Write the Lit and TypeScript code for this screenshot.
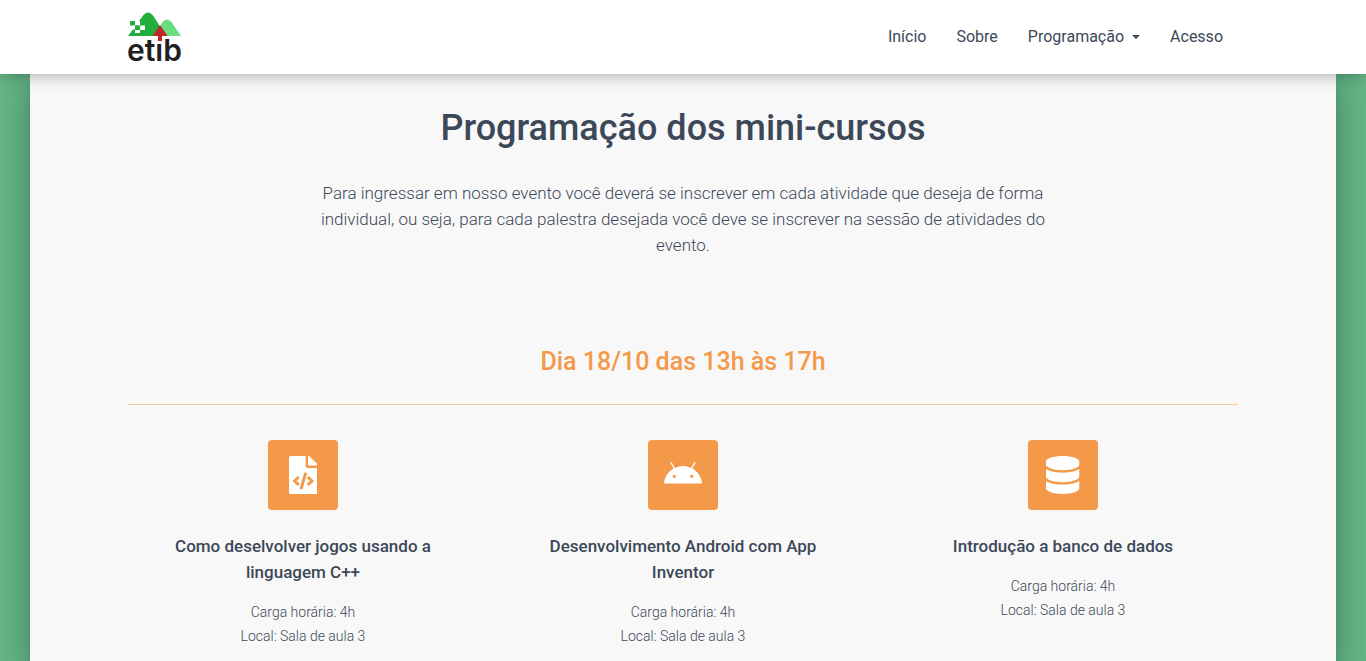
import { LitElement, html, css, svg } from "lit";
import { customElement, property } from "lit/decorators.js";

type IconName = "code" | "android" | "database";

interface Course {
  icon: IconName;
  title: string;
  hours: string;
  place: string;
}

const ICONS: Record<IconName, { width: number; path: string }> = {
  code: {
    width: 384,
    path: "M384 121.941V128H256V0h6.059c6.365 0 12.47 2.529 16.971 7.029l97.941 97.941A24.005 24.005 0 0 1 384 121.941zM248 160c-13.2 0-24-10.8-24-24V0H24C10.745 0 0 10.745 0 24v464c0 13.255 10.745 24 24 24h336c13.255 0 24-10.745 24-24V160H248zM123.206 400.505a5.4 5.4 0 0 1-7.633.246l-64.866-60.812a5.4 5.4 0 0 1 0-7.879l64.866-60.812a5.4 5.4 0 0 1 7.633.246l19.579 20.885a5.4 5.4 0 0 1-.372 7.747L101.65 336l40.763 35.874a5.4 5.4 0 0 1 .372 7.747l-19.579 20.884zm51.295 50.479l-27.97-8.147a5.402 5.402 0 0 1-3.674-6.692l61.44-210.94a5.4 5.4 0 0 1 6.692-3.674l27.97 8.147a5.4 5.4 0 0 1 3.674 6.692l-61.44 210.94a5.4 5.4 0 0 1-6.692 3.674zm160.792-111.045l-64.866 60.812a5.4 5.4 0 0 1-7.633-.246l-19.58-20.885a5.4 5.4 0 0 1 .372-7.747L284.35 336l-40.763-35.874a5.4 5.4 0 0 1-.372-7.747l19.58-20.885a5.4 5.4 0 0 1 7.633-.246l64.866 60.812a5.4 5.4 0 0 1-.001 7.879z",
  },
  android: {
    width: 576,
    path: "M420.55 301.93a24 24 0 1 1 24-24 24 24 0 0 1-24 24m-265.1 0a24 24 0 1 1 24-24 24 24 0 0 1-24 24m273.7-144.48 47.94-83a10 10 0 1 0-17.27-10l-48.54 84.07a301.25 301.25 0 0 0-246.56 0L116.18 64.45a10 10 0 1 0-17.27 10l47.94 83C64.53 202.22 8.24 285.55 0 384H576c-8.24-98.45-64.54-181.78-146.85-226.55",
  },
  database: {
    width: 448,
    path: "M448 73.143v45.714C448 159.143 347.667 192 224 192S0 159.143 0 118.857V73.143C0 32.857 100.333 0 224 0s224 32.857 224 73.143zM448 176v102.857C448 319.143 347.667 352 224 352S0 319.143 0 278.857V176c48.125 33.143 136.208 48.572 224 48.572S399.874 209.143 448 176zm0 160v102.857C448 479.143 347.667 512 224 512S0 479.143 0 438.857V336c48.125 33.143 136.208 48.572 224 48.572S399.874 369.143 448 336z",
  },
};

const COURSES: Course[] = [
  { icon: "code", title: "Como deselvolver jogos usando a linguagem C++", hours: "4h", place: "Sala de aula 3" },
  { icon: "android", title: "Desenvolvimento Android com App Inventor", hours: "4h", place: "Sala de aula 3" },
  { icon: "database", title: "Introdução a banco de dados", hours: "4h", place: "Sala de aula 3" },
];

@customElement("etib-logo")
export class EtibLogo extends LitElement {
  static styles = css`
    :host {
      display: block;
    }
    .logo {
      display: block;
      width: 54px;
      height: 50px;
      overflow: visible;
    }
    .word {
      font: 600 30px Inter, "Liberation Sans", sans-serif;
      fill: #231f20;
    }
  `;

  render() {
    return html`<svg class="logo" viewBox="0 0 54 50" role="img" aria-label="etib">
      ${svg`
        <path fill="#6bdc80" d="M26 24 L34.500 10 Q39 5 43.500 10 L53 24 Z" />
        <path fill="#22ad3c" d="M0 24 L14 5 Q20 -4 26 5 L38 24 Z" />
        <path fill="#fff" d="M7 9h5v4.500h-5z M12 13.500h5v4.500h-5z M2 13.500h5v4h-5z M7 18h5v3h-5z" />
        <path fill="#22ad3c" d="M2 9h5v4.500h-5z M7 13.500h5v4.500h-5z" />
        <text class="word" x="-1" y="49">etib</text>
        <path fill="#fff" d="M29 24h6v7h-6z" />
        <path fill="#c1272d" d="M32 13 L39.500 24 H34 V29 H30 V24 H24.500 Z" />
      `}
    </svg>`;
  }
}

@customElement("site-header")
export class SiteHeader extends LitElement {
  static styles = css`
    :host {
      display: block;
      position: relative;
      z-index: 1;
      background: #fff;
      box-shadow: 0 4px 18px 0 rgba(0, 0, 0, 0.12), 0 7px 10px -5px rgba(0, 0, 0, 0.15);
    }
    .bar {
      display: flex;
      align-items: center;
      justify-content: space-between;
      box-sizing: border-box;
      max-width: 1140px;
      min-height: 74px;
      margin: 0 auto;
      padding: 0 15px;
    }
    .links {
      display: flex;
      margin: 0;
      padding: 0;
      list-style: none;
    }
    .link {
      display: flex;
      align-items: center;
      gap: 8px;
      padding: 10px 15px;
      font-size: 16px;
      line-height: 20px;
      color: #3c4858;
      text-decoration: none;
    }
    .caret {
      border: 4px solid transparent;
      border-top-color: currentColor;
      border-bottom: 0;
    }
  `;

  render() {
    return html`<nav class="bar" aria-label="Principal">
      <a href="#inicio" aria-label="etib"><etib-logo></etib-logo></a>
      <ul class="links">
        <li><a class="link" href="#inicio">Início</a></li>
        <li><a class="link" href="#sobre">Sobre</a></li>
        <li><a class="link" href="#programacao">Programação<span class="caret"></span></a></li>
        <li><a class="link" href="#acesso">Acesso</a></li>
      </ul>
    </nav>`;
  }
}

@customElement("course-card")
export class CourseCard extends LitElement {
  @property({ attribute: false }) course!: Course;

  static styles = css`
    :host {
      display: block;
      padding: 0 35px;
      text-align: center;
    }
    .tile {
      display: flex;
      align-items: center;
      justify-content: center;
      width: 70px;
      height: 70px;
      margin: 0 auto;
      border-radius: 4px;
      background: #f4994a;
    }
    .icon {
      max-width: 38px;
      height: 38px;
      fill: #fff;
    }
    .title {
      margin: 23px 0 15px;
      font-size: 17px;
      line-height: 26px;
      font-weight: 500;
    }
    .details {
      margin: 0;
      font-size: 14px;
      line-height: 24px;
      font-weight: 300;
    }
  `;

  render() {
    const { icon, title, hours, place } = this.course;
    const { width, path } = ICONS[icon];
    return html`
      <div class="tile">
        <svg class="icon" viewBox="0 0 ${width} 512" aria-hidden="true"><path d=${path}></path></svg>
      </div>
      <h4 class="title">${title}</h4>
      <p class="details">Carga horária: ${hours}<br />Local: ${place}</p>
    `;
  }
}

@customElement("app-root")
export class AppRoot extends LitElement {
  static styles = css`
    :host {
      display: flex;
      flex-direction: column;
      height: 100vh;
      overflow: hidden;
      background: #64b587;
      color: #3c4858;
      font-family: Roboto, "Liberation Sans", sans-serif;
    }
    .page {
      flex: 1;
      margin: 0 30px;
      background: #f8f8f8;
      box-shadow: 0 16px 24px 2px rgba(0, 0, 0, 0.14), 0 6px 30px 5px rgba(0, 0, 0, 0.12),
        0 8px 10px -5px rgba(0, 0, 0, 0.2);
    }
    .container {
      max-width: 1140px;
      margin: 0 auto;
      text-align: center;
    }
    .heading {
      margin: 0;
      padding-top: 26px;
      font-size: 36px;
      line-height: 56px;
      font-weight: 500;
    }
    .intro {
      max-width: 730px;
      margin: 24px auto 0;
      font-size: 17px;
      line-height: 26px;
      font-weight: 300;
    }
    .day {
      margin: 83px 15px 35px;
      padding-bottom: 21px;
      border-bottom: 1px solid #f9c698;
      font-size: 25px;
      line-height: 42px;
      font-weight: 500;
      color: #f4994a;
    }
    .courses {
      display: grid;
      grid-template-columns: repeat(auto-fit, minmax(300px, 1fr));
    }
  `;

  render() {
    return html`
      <site-header></site-header>
      <main class="page">
        <div class="container">
          <h2 class="heading">Programação dos mini-cursos</h2>
          <p class="intro">
            Para ingressar em nosso evento você deverá se inscrever em cada atividade que deseja de forma
            individual, ou seja, para cada palestra desejada você deve se inscrever na sessão de atividades do
            evento.
          </p>
          <h3 class="day">Dia 18/10 das 13h às 17h</h3>
          <div class="courses">
            ${COURSES.map((course) => html`<course-card .course=${course}></course-card>`)}
          </div>
        </div>
      </main>
    `;
  }
}
